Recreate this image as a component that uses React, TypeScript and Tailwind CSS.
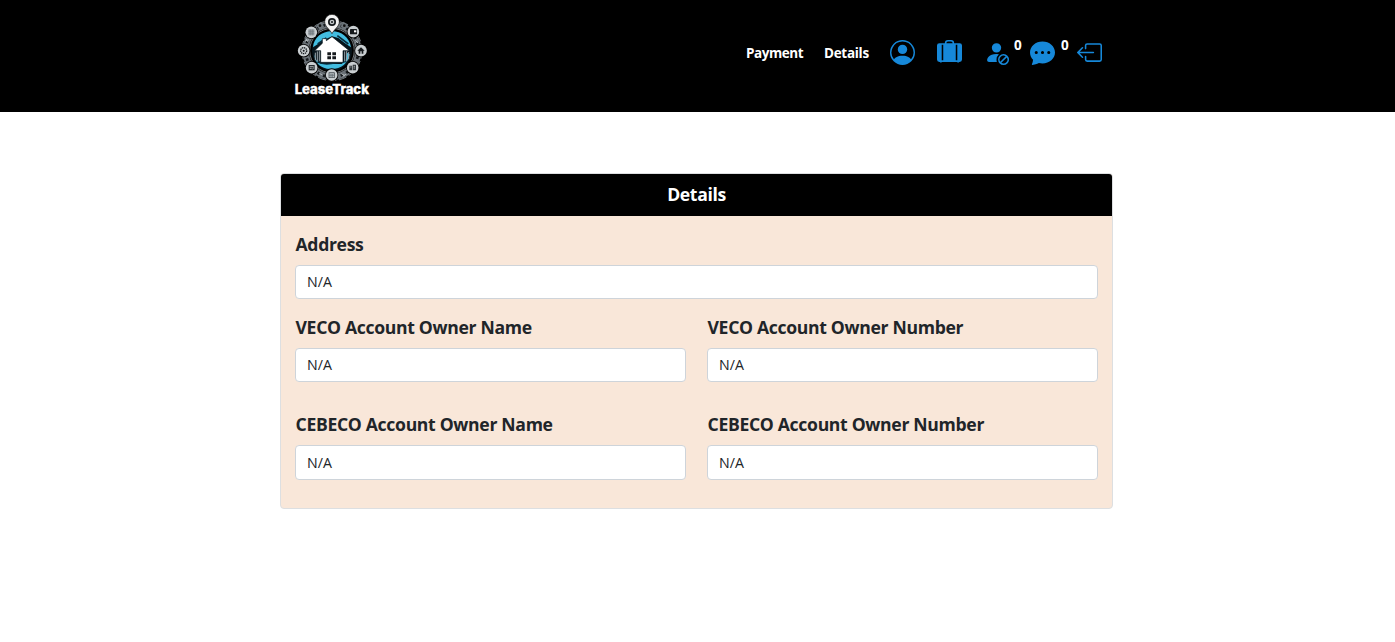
import type { ReactNode } from "react";
import {
  BsPersonCircle,
  BsSuitcaseLgFill,
  BsPersonFillSlash,
  BsChatDotsFill,
  BsBoxArrowLeft,
} from "react-icons/bs";

function Badge({ x, y, children }: { x: number; y: number; children: ReactNode }) {
  return (
    <g transform={`translate(${x} ${y})`}>
      <circle r="20" fill="#000" />
      <circle r="17.5" fill="#c9ced1" />
      {children}
    </g>
  );
}

function Logo() {
  return (
    <svg width="95" height="100" viewBox="0 0 285 300" className="block">
      <circle cx="141" cy="137" r="79" fill="none" stroke="#6a7177" strokeWidth="19" />
      <circle cx="141" cy="137" r="79" fill="none" stroke="#15191c" strokeWidth="8" strokeDasharray="7 11" />
      <circle cx="141" cy="137" r="67" fill="none" stroke="#8d9498" strokeWidth="2.5" />
      <circle cx="141" cy="137" r="90" fill="none" stroke="#777e83" strokeWidth="3" strokeDasharray="24 8" />
      <rect x="97" y="54" width="17" height="17" fill="#6d757b" transform="rotate(-30 105 62)" />
      <circle cx="105" cy="62" r="4" fill="#111" />
      <rect x="170" y="53" width="17" height="17" fill="#6d757b" transform="rotate(28 178 61)" />
      <circle cx="178" cy="62" r="4" fill="#111" />
      <circle cx="141" cy="137" r="60" fill="#07141b" />
      <path d="M84 127C86 98 111 79 140 79C169 79 193 96 198 127L178 113L160 99L141 94L121 103Z" fill="#43bde0" />
      <path d="M98 117L124 99M157 92L190 117" fill="none" stroke="#082b3a" strokeWidth="5" />
      <path d="M88 148C90 175 108 193 139 192C169 192 190 175 194 148L186 143L182 167L170 177H108L94 165Z" fill="#43bde0" />
      <path d="M96 171Q116 180 139 176T185 170" fill="none" stroke="#082b3a" strokeWidth="4" />
      <path d="M91 143V166M97 139V169M103 137V169M179 139V169M185 137V169M191 141V163" stroke="#9aa4aa" strokeWidth="3" />
      <path d="M89 137L112 115V101H124V107L141 95L193 137H174V172H107V137Z" fill="#fff" stroke="#08171e" strokeWidth="2" />
      <path d="M127 142H138V151H127ZM142 142H153V151H142ZM127 154H138V163H127ZM142 154H153V163H142Z" fill="#15191c" />
      <path d="M141 86C135 73 119 65 119 50A22 22 0 0 1 163 50C163 65 147 73 141 86Z" fill="#f3f3f3" stroke="#000" strokeWidth="2" />
      <circle cx="141" cy="51" r="12" fill="#15191c" />
      <circle cx="141" cy="51" r="7" fill="#c6cbcd" />
      <circle cx="141" cy="51" r="3" fill="#15191c" />
      <Badge x={79} y={82}>
        <rect x="-9" y="-9" width="18" height="18" fill="#91999d" />
        <path d="M-9 -3H9M-9 3H9M-3 -9V9M3 -9V9" stroke="#6d757a" strokeWidth="1.5" />
      </Badge>
      <Badge x={205} y={80}>
        <rect x="-10" y="-8" width="21" height="16" rx="2" fill="#15191c" />
        <rect x="2" y="-4" width="7" height="6" fill="#fff" />
      </Badge>
      <Badge x={56} y={137}>
        <circle r="9" fill="none" stroke="#15191c" strokeWidth="4" strokeDasharray="4 2" />
        <circle r="3" fill="#15191c" />
      </Badge>
      <Badge x={228} y={137}>
        <path d="M-11 0L0 -10L11 0H7V9H2V2H-2V9H-7V0Z" fill="#15191c" />
      </Badge>
      <Badge x={80} y={188}>
        <rect x="-9" y="-8" width="18" height="16" fill="#252b2f" />
        <path d="M-6 -3H6M-6 2H0M2 4L7 0" stroke="#e4e7e8" strokeWidth="2" />
      </Badge>
      <Badge x={203} y={188}>
        <path d="M-10 8V-6H-2V8ZM0 8V-9H10V8Z" fill="#30373b" />
        <path d="M-7 -2H-4M3 -4H7M3 1H7" stroke="#ddd" strokeWidth="2" />
      </Badge>
      <Badge x={140} y={210}>
        <rect x="-8" y="-7" width="16" height="15" fill="none" stroke="#3a4146" strokeWidth="2" />
        <path d="M-8 -3H8M-8 2H8M-2 -3V8M3 -3V8" stroke="#59636a" strokeWidth="2" />
      </Badge>
      <path d="M211 106L219 114M218 107L212 113M60 108L72 104M63 101L70 112M103 205L112 210M169 206L180 212M173 214L184 207" stroke="#aeb5b8" strokeWidth="3" />
      <text x="29" y="268" textLength="223" lengthAdjust="spacingAndGlyphs" fill="#fff" stroke="#fff" strokeWidth="1" fontFamily="Inter, sans-serif" fontSize="39" fontWeight="800">
        LeaseTrack
      </text>
    </svg>
  );
}

function Field({ label, box = "h-[34px] pb-px" }: { label: string; box?: string }) {
  return (
    <div className="flex flex-1 flex-col">
      <label className="mb-[7px] h-[27px] pl-[0.5px] text-[17.6px] leading-[27px] font-bold tracking-[-0.32px] whitespace-nowrap">
        {label}
      </label>
      <div className={`flex items-center rounded-[4px] border border-[#ced4da] bg-white px-[11px] text-[14.2px] ${box}`}>
        N/A
      </div>
    </div>
  );
}

export default function App() {
  return (
    <div className="min-h-[642px] bg-white font-['Open_Sans','Noto_Sans',sans-serif] text-[#212529]">
      <header className="flex h-28 items-start justify-between bg-black pt-[5px] pr-[293px] pl-[285px]">
        <Logo />
        <nav className="mt-[35px] flex h-[25px] items-center text-[13.5px] font-bold text-white">
          <a className="w-[57px] pt-0.5 tracking-[-0.45px] whitespace-nowrap">Payment</a>
          <a className="ml-[21px] w-[45px] pt-0.5 tracking-[-0.3px] whitespace-nowrap">Details</a>
          <BsPersonCircle className="ml-[21px] size-[25px] text-[#1688d9]" />
          <BsSuitcaseLgFill className="ml-[22px] size-[25px] text-[#1688d9]" />
          <BsPersonFillSlash className="ml-[22px] size-[25px] text-[#1688d9]" />
          <span className="mb-4 ml-[5px] w-[9px] leading-4">0</span>
          <BsChatDotsFill className="ml-[7px] size-[25px] text-[#1688d9]" />
          <span className="mb-4 ml-[6px] w-[9px] leading-4">0</span>
          <BsBoxArrowLeft className="ml-[7px] size-[25px] text-[#1688d9]" />
        </nav>
      </header>
      <main className="mt-[61px] ml-[280px] h-[336px] w-[833px] overflow-hidden rounded-[4px] border border-[#dddfe1] bg-[#f9e7d9]">
        <h1 className="h-[42px] bg-black text-center text-[17.6px] leading-[41px] font-bold tracking-[-0.35px] text-white">
          Details
        </h1>
        <div className="px-[14px] pt-[15px]">
          <div className="flex">
            <Field label="Address" />
          </div>
          <div className="mt-[15px] flex gap-[21px]">
            <Field label="VECO Account Owner Name" />
            <Field label="VECO Account Owner Number" />
          </div>
          <div className="mt-[29px] flex gap-[21px]">
            <Field label="CEBECO Account Owner Name" box="h-[35px]" />
            <Field label="CEBECO Account Owner Number" box="h-[35px]" />
          </div>
        </div>
      </main>
    </div>
  );
}
